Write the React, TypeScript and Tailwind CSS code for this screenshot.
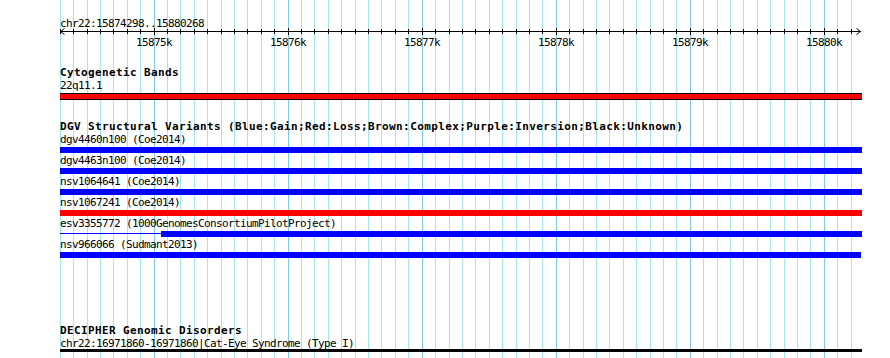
import React from 'react';

const START = 15874298;
const SCALE = 0.13405;
const toX = (pos: number) => 60 + (pos - START) * SCALE;

const gridPositions = Array.from({ length: 60 }, (_, i) => 15874300 + i * 100);

const dgvRows = [
  { label: 'dgv4460n100 (Coe2014)', color: 'bg-[#0000ff]', width: 'w-[802px]' },
  { label: 'dgv4463n100 (Coe2014)', color: 'bg-[#0000ff]', width: 'w-[802px]' },
  { label: 'nsv1064641 (Coe2014)', color: 'bg-[#0000ff]', width: 'w-[802px]' },
  { label: 'nsv1067241 (Coe2014)', color: 'bg-[#ff0000]', width: 'w-[802px]' },
  { label: 'esv3355772 (1000GenomesConsortiumPilotProject)', color: 'bg-[#0000ff]', width: 'w-[802px]', split: true },
  { label: 'nsv966066 (Sudmant2013)', color: 'bg-[#0000ff]', width: 'w-[801px]' },
];

const mono = "font-['DejaVu_Sans_Mono','Liberation_Mono',monospace]";
const label = `${mono} text-[11px] leading-[10px] tracking-[-0.62px] text-black whitespace-nowrap`;
const title = `${mono} text-[11px] leading-[10px] tracking-[0.38px] font-bold text-black whitespace-nowrap`;

const Grid: React.FC = () => (
  <svg className="absolute inset-0" width={890} height={358}>
    {gridPositions.map((p) => {
      const major = p % 1000 === 0;
      return (
        <rect
          key={p}
          x={Math.floor(toX(p))}
          y={0}
          width={1}
          height={358}
          fill={major ? '#7fcbe8' : '#a8e4ee'}
        />
      );
    })}
  </svg>
);

const Axis: React.FC = () => (
  <svg className="block" width={890} height={50}>
    <text
      x={60}
      y={27}
      fontFamily="DejaVu Sans Mono, monospace"
      fontSize={11}
      letterSpacing={-0.62}
      fill="#000"
    >
      chr22:15874298..15880268
    </text>
    <rect x={60} y={31} width={801} height={1} fill="#000" />
    <path d="M60.5 31.5 L64.5 28.5 M60.5 31.5 L64.5 34.5" stroke="#000" strokeWidth={1} fill="none" />
    <path d="M860.5 31.5 L856.5 28.5 M860.5 31.5 L856.5 34.5" stroke="#000" strokeWidth={1} fill="none" />
    {gridPositions.map((p) => {
      const major = p % 1000 === 0;
      const x = Math.floor(toX(p));
      return (
        <g key={p}>
          <rect x={x} y={major ? 28 : 29} width={1} height={major ? 7 : 5} fill="#000" />
          {major && (
            <text
              x={x}
              y={46}
              textAnchor="middle"
              fontFamily="DejaVu Sans Mono, monospace"
              fontSize={11}
              letterSpacing={-0.62}
              fill="#000"
            >
              {p / 1000}k
            </text>
          )}
        </g>
      );
    })}
  </svg>
);

const App: React.FC = () => {
  return (
    <div className="relative w-[890px] h-[358px] overflow-hidden bg-white">
      <Grid />
      <div className="relative">
        <Axis />
        <div className="pl-[60px]">
          {/* Cytogenetic bands */}
          <div className={`${title} mt-[18px]`}>Cytogenetic Bands</div>
          <div className={`${label} mt-[3px]`}>22q11.1</div>
          <div className="mt-[2px] h-[7px] w-[802px] bg-[#ff0000] border-y border-black" />

          {/* DGV */}
          <div className={`${title} mt-[22px]`}>
            DGV Structural Variants (Blue:Gain;Red:Loss;Brown:Complex;Purple:Inversion;Black:Unknown)
          </div>
          {dgvRows.map((row, i) => (
            <div key={row.label} className={i === 0 ? 'pt-[3px]' : 'pt-[3px]'}>
              <div className={label}>{row.label}</div>
              {row.split ? (
                <div className="mt-[2px] flex h-[6px] items-start">
                  <div className={`mt-[2px] h-px w-[101px] ${row.color}`} />
                  <div className={`h-[6px] w-[701px] ${row.color}`} />
                </div>
              ) : (
                <div className={`mt-[2px] h-[6px] ${row.width} ${row.color}`} />
              )}
            </div>
          ))}

          {/* DECIPHER */}
          <div className={`${title} mt-[68px]`}>DECIPHER Genomic Disorders</div>
          <div className={`${label} mt-[3px]`}>chr22:16971860-16971860|Cat-Eye Syndrome (Type I)</div>
          <div className="h-[3px] w-[802px] bg-black" />
        </div>
      </div>
    </div>
  );
};

export default App;
